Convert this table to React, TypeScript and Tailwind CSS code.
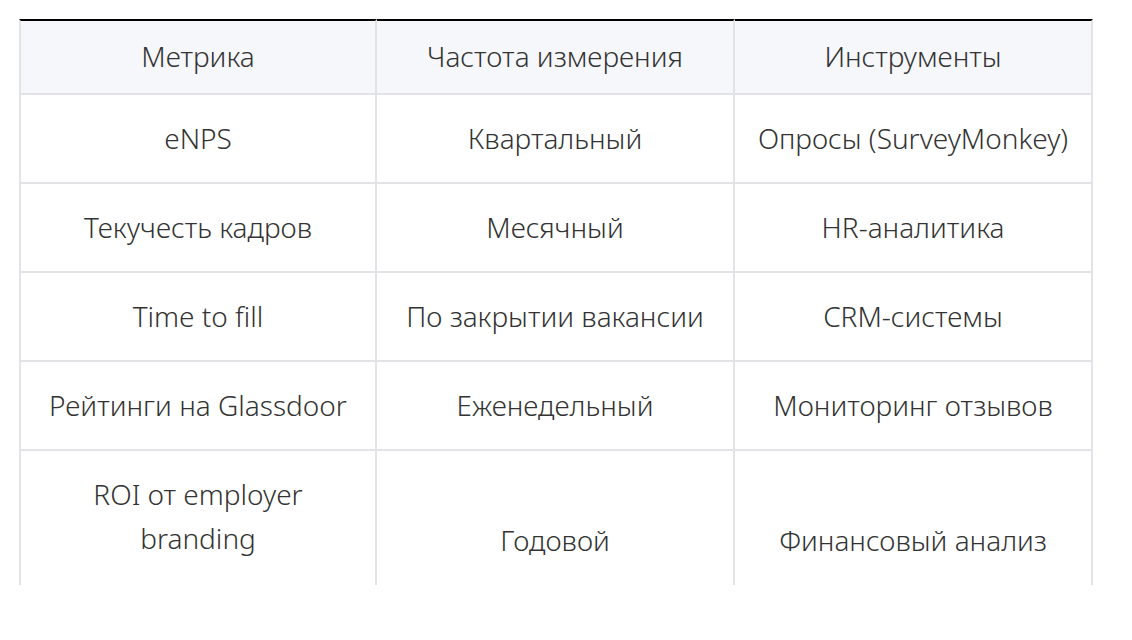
import React from "react";

const rows = [
  ["eNPS", "Квартальный", "Опросы (SurveyMonkey)"],
  ["Текучесть кадров", "Месячный", "HR-аналитика"],
  ["Time to fill", "По закрытии вакансии", "CRM-системы"],
  ["Рейтинги на Glassdoor", "Еженедельный", "Мониторинг отзывов"],
];

const headers = ["Метрика", "Частота измерения", "Инструменты"];

export default function App() {
  return (
    <div className="w-[1132px] h-[640px] bg-white font-['Noto_Sans',sans-serif] text-[#333333]">
      <div className="h-[585px] overflow-hidden pt-[19px] pl-[19px]">
        <table className="w-[1074px] table-fixed border-separate border-spacing-0 text-[28px] leading-[44px] font-light text-center">
          <thead>
            <tr>
              {headers.map((h, i) => (
                <th
                  key={h}
                  className={`bg-[#f6f7fb] font-light border-t-2 border-t-black border-r-2 border-b-2 border-r-[#e2e2e7] border-b-[#e2e2e7] px-3 pt-[13px] pb-[15px] ${
                    i === 0 ? "border-l-2 border-l-[#e2e2e7]" : ""
                  }`}
                >
                  {h}
                </th>
              ))}
            </tr>
          </thead>
          <tbody>
            {rows.map((r, ri) => (
              <tr key={ri}>
                {r.map((c, i) => (
                  <td
                    key={i}
                    className={`border-r-2 border-b-2 border-[#e2e2e7] px-2 pt-[20.5px] pb-[22.5px] align-middle whitespace-nowrap ${
                      i === 0 ? "border-l-2" : ""
                    }`}
                  >
                    {c}
                  </td>
                ))}
              </tr>
            ))}
            <tr>
              <td className="border-r-2 border-b-2 border-l-2 border-[#e2e2e7] px-2 pt-[20.5px] pb-[22.5px] h-[182px] align-top">
                ROI от employer
                <br />
                branding
              </td>
              <td className="border-r-2 border-b-2 border-[#e2e2e7] px-2 pt-[20.5px] pb-[22.5px] align-middle">
                Годовой
              </td>
              <td className="border-r-2 border-b-2 border-[#e2e2e7] px-2 pt-[20.5px] pb-[22.5px] align-middle">
                Финансовый анализ
              </td>
            </tr>
          </tbody>
        </table>
      </div>
    </div>
  );
}
